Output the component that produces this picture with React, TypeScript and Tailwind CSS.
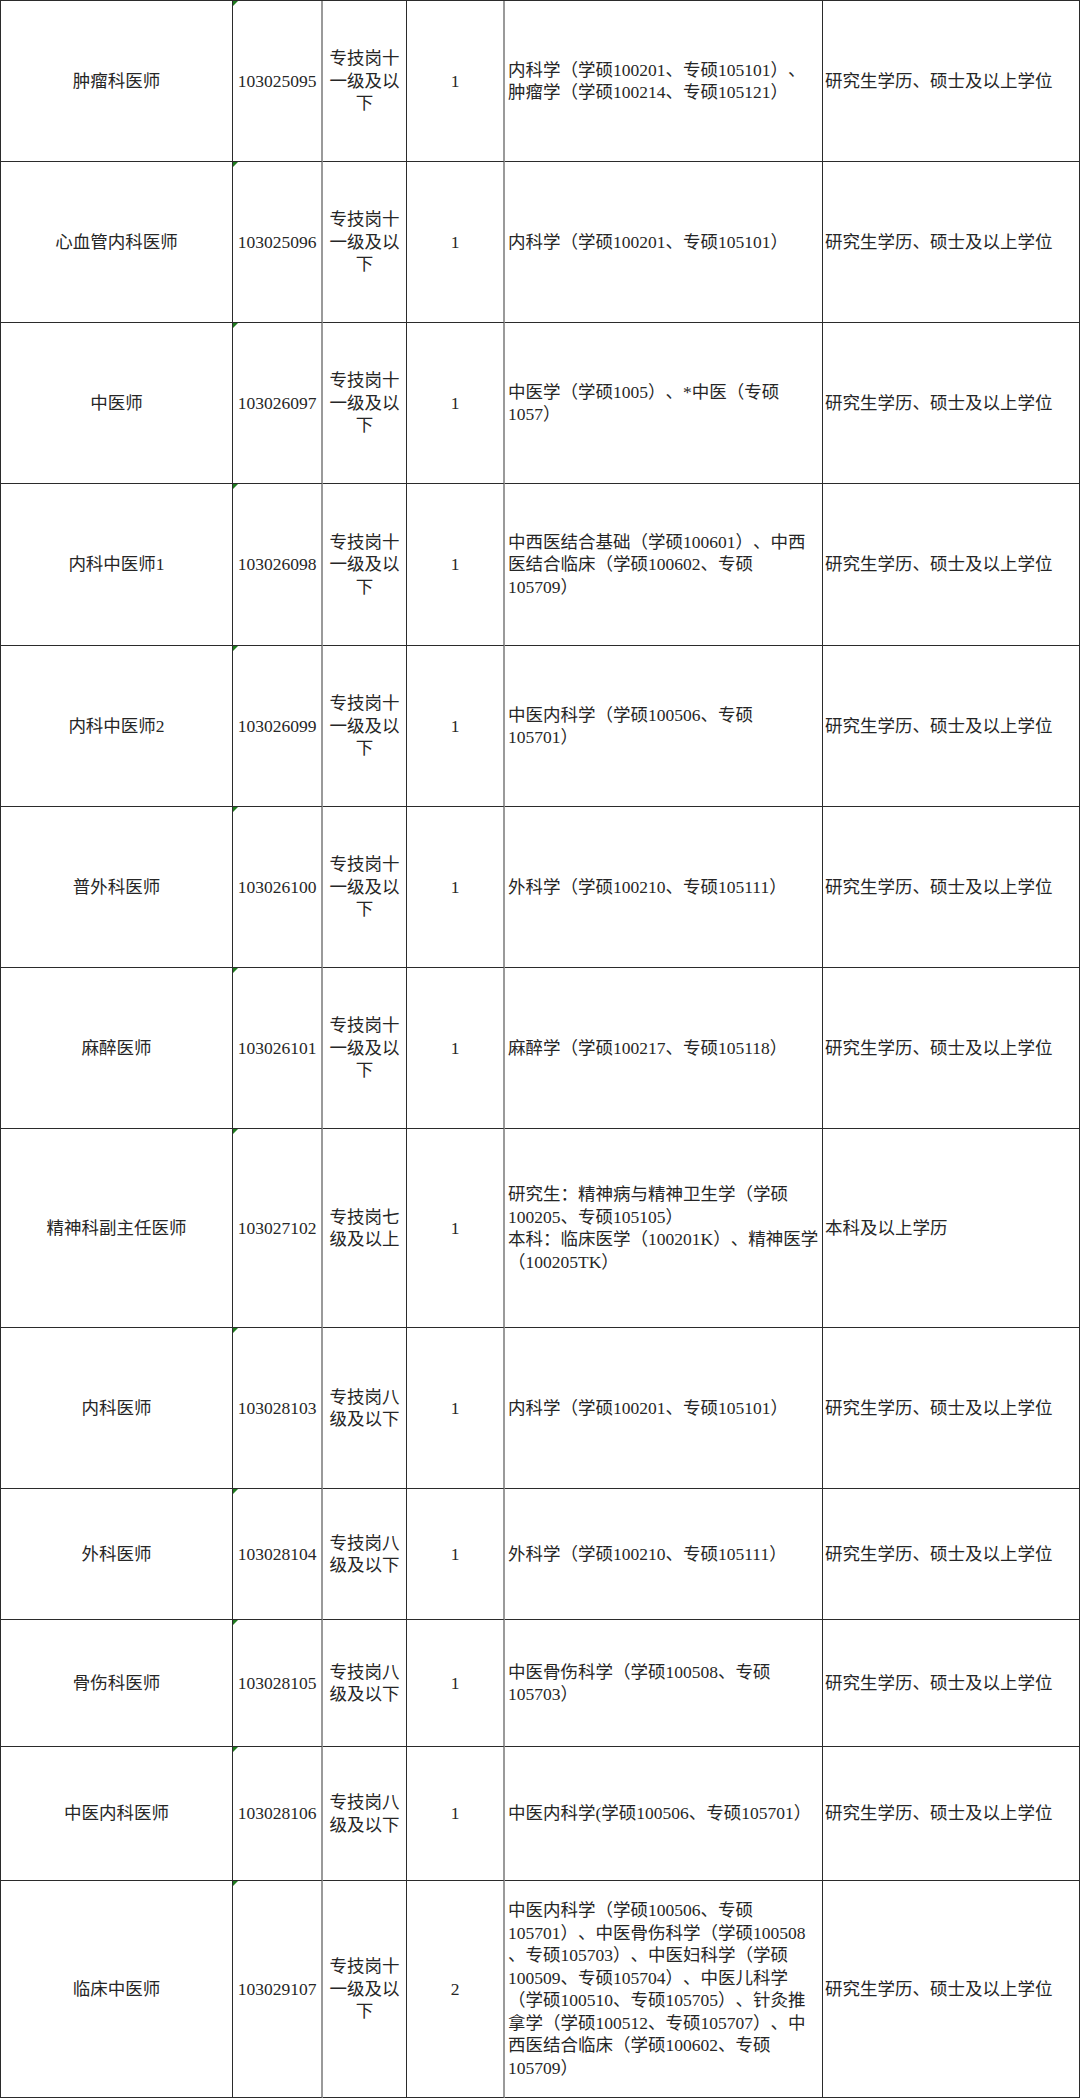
type Post = {
  name: string
  code: string
  level: string[]
  count: string
  major: string[]
  edu: string
  height: string
}

const LEVEL_11 = ['专技岗十', '一级及以', '下']
const LEVEL_8 = ['专技岗八', '级及以下']
const MASTER = '研究生学历、硕士及以上学位'

const posts: Post[] = [
  {
    name: '肿瘤科医师',
    code: '103025095',
    level: LEVEL_11,
    count: '1',
    major: ['内科学（学硕100201、专硕105101）、', '肿瘤学（学硕100214、专硕105121）'],
    edu: MASTER,
    height: 'h-[161px]',
  },
  {
    name: '心血管内科医师',
    code: '103025096',
    level: LEVEL_11,
    count: '1',
    major: ['内科学（学硕100201、专硕105101）'],
    edu: MASTER,
    height: 'h-[161px]',
  },
  {
    name: '中医师',
    code: '103026097',
    level: LEVEL_11,
    count: '1',
    major: ['中医学（学硕1005）、*中医（专硕', '1057）'],
    edu: MASTER,
    height: 'h-[161px]',
  },
  {
    name: '内科中医师1',
    code: '103026098',
    level: LEVEL_11,
    count: '1',
    major: ['中西医结合基础（学硕100601）、中西', '医结合临床（学硕100602、专硕', '105709）'],
    edu: MASTER,
    height: 'h-[162px]',
  },
  {
    name: '内科中医师2',
    code: '103026099',
    level: LEVEL_11,
    count: '1',
    major: ['中医内科学（学硕100506、专硕', '105701）'],
    edu: MASTER,
    height: 'h-[161px]',
  },
  {
    name: '普外科医师',
    code: '103026100',
    level: LEVEL_11,
    count: '1',
    major: ['外科学（学硕100210、专硕105111）'],
    edu: MASTER,
    height: 'h-[161px]',
  },
  {
    name: '麻醉医师',
    code: '103026101',
    level: LEVEL_11,
    count: '1',
    major: ['麻醉学（学硕100217、专硕105118）'],
    edu: MASTER,
    height: 'h-[161px]',
  },
  {
    name: '精神科副主任医师',
    code: '103027102',
    level: ['专技岗七', '级及以上'],
    count: '1',
    major: [
      '研究生：精神病与精神卫生学（学硕',
      '100205、专硕105105）',
      '本科：临床医学（100201K）、精神医学',
      '（100205TK）',
    ],
    edu: '本科及以上学历',
    height: 'h-[199px]',
  },
  {
    name: '内科医师',
    code: '103028103',
    level: LEVEL_8,
    count: '1',
    major: ['内科学（学硕100201、专硕105101）'],
    edu: MASTER,
    height: 'h-[161px]',
  },
  {
    name: '外科医师',
    code: '103028104',
    level: LEVEL_8,
    count: '1',
    major: ['外科学（学硕100210、专硕105111）'],
    edu: MASTER,
    height: 'h-[131px]',
  },
  {
    name: '骨伤科医师',
    code: '103028105',
    level: LEVEL_8,
    count: '1',
    major: ['中医骨伤科学（学硕100508、专硕', '105703）'],
    edu: MASTER,
    height: 'h-[127px]',
  },
  {
    name: '中医内科医师',
    code: '103028106',
    level: LEVEL_8,
    count: '1',
    major: ['中医内科学(学硕100506、专硕105701）'],
    edu: MASTER,
    height: 'h-[134px]',
  },
  {
    name: '临床中医师',
    code: '103029107',
    level: LEVEL_11,
    count: '2',
    major: [
      '中医内科学（学硕100506、专硕',
      '105701）、中医骨伤科学（学硕100508',
      '、专硕105703）、中医妇科学（学硕',
      '100509、专硕105704）、中医儿科学',
      '（学硕100510、专硕105705）、针灸推',
      '拿学（学硕100512、专硕105707）、中',
      '西医结合临床（学硕100602、专硕',
      '105709）',
    ],
    edu: MASTER,
    height: 'h-[217px]',
  },
]

function Lines({ lines }: { lines: string[] }) {
  return (
    <div>
      {lines.map((line, i) => (
        <div key={i} className="whitespace-nowrap">
          {line}
        </div>
      ))}
    </div>
  )
}

function PostRow({ post }: { post: Post }) {
  return (
    <div className={`grid grid-cols-[232px_90px_84px_98px_318px_257px] ${post.height}`}>
      <div className="flex items-center justify-center border-r border-b border-[#2b2b2b]">
        {post.name}
      </div>
      <div className="relative flex items-center justify-center border-b border-r-2 border-b-[#2b2b2b] border-r-[#9a9a9a]">
        {/* spreadsheet "number stored as text" marker */}
        <span className="absolute top-0 left-0 h-0 w-0 border-t-[5px] border-r-[5px] border-t-[#1f7a1f] border-r-transparent" />
        {post.code}
      </div>
      <div className="flex items-center justify-center border-r border-b border-[#2b2b2b] text-center">
        <Lines lines={post.level} />
      </div>
      <div className="flex items-center justify-center border-b border-r-2 border-b-[#2b2b2b] border-r-[#9a9a9a]">
        {post.count}
      </div>
      <div className="flex items-center overflow-hidden border-r border-b border-[#2b2b2b] pl-[3px]">
        <Lines lines={post.major} />
      </div>
      <div className="flex items-center overflow-hidden border-r border-b border-[#2b2b2b] pl-[2px] whitespace-nowrap">
        {post.edu}
      </div>
    </div>
  )
}

export default function App() {
  return (
    <div className="w-[1080px] bg-white font-['Liberation_Serif','Noto_Sans_CJK_SC',serif] text-[17.5px] leading-[22.5px] text-[#262626] [text-spacing-trim:space-all] [font-feature-settings:'halt'_0,'chws'_0]">
      <div className="border-t border-l border-[#2b2b2b]">
        {posts.map((post) => (
          <PostRow key={post.code} post={post} />
        ))}
      </div>
    </div>
  )
}
